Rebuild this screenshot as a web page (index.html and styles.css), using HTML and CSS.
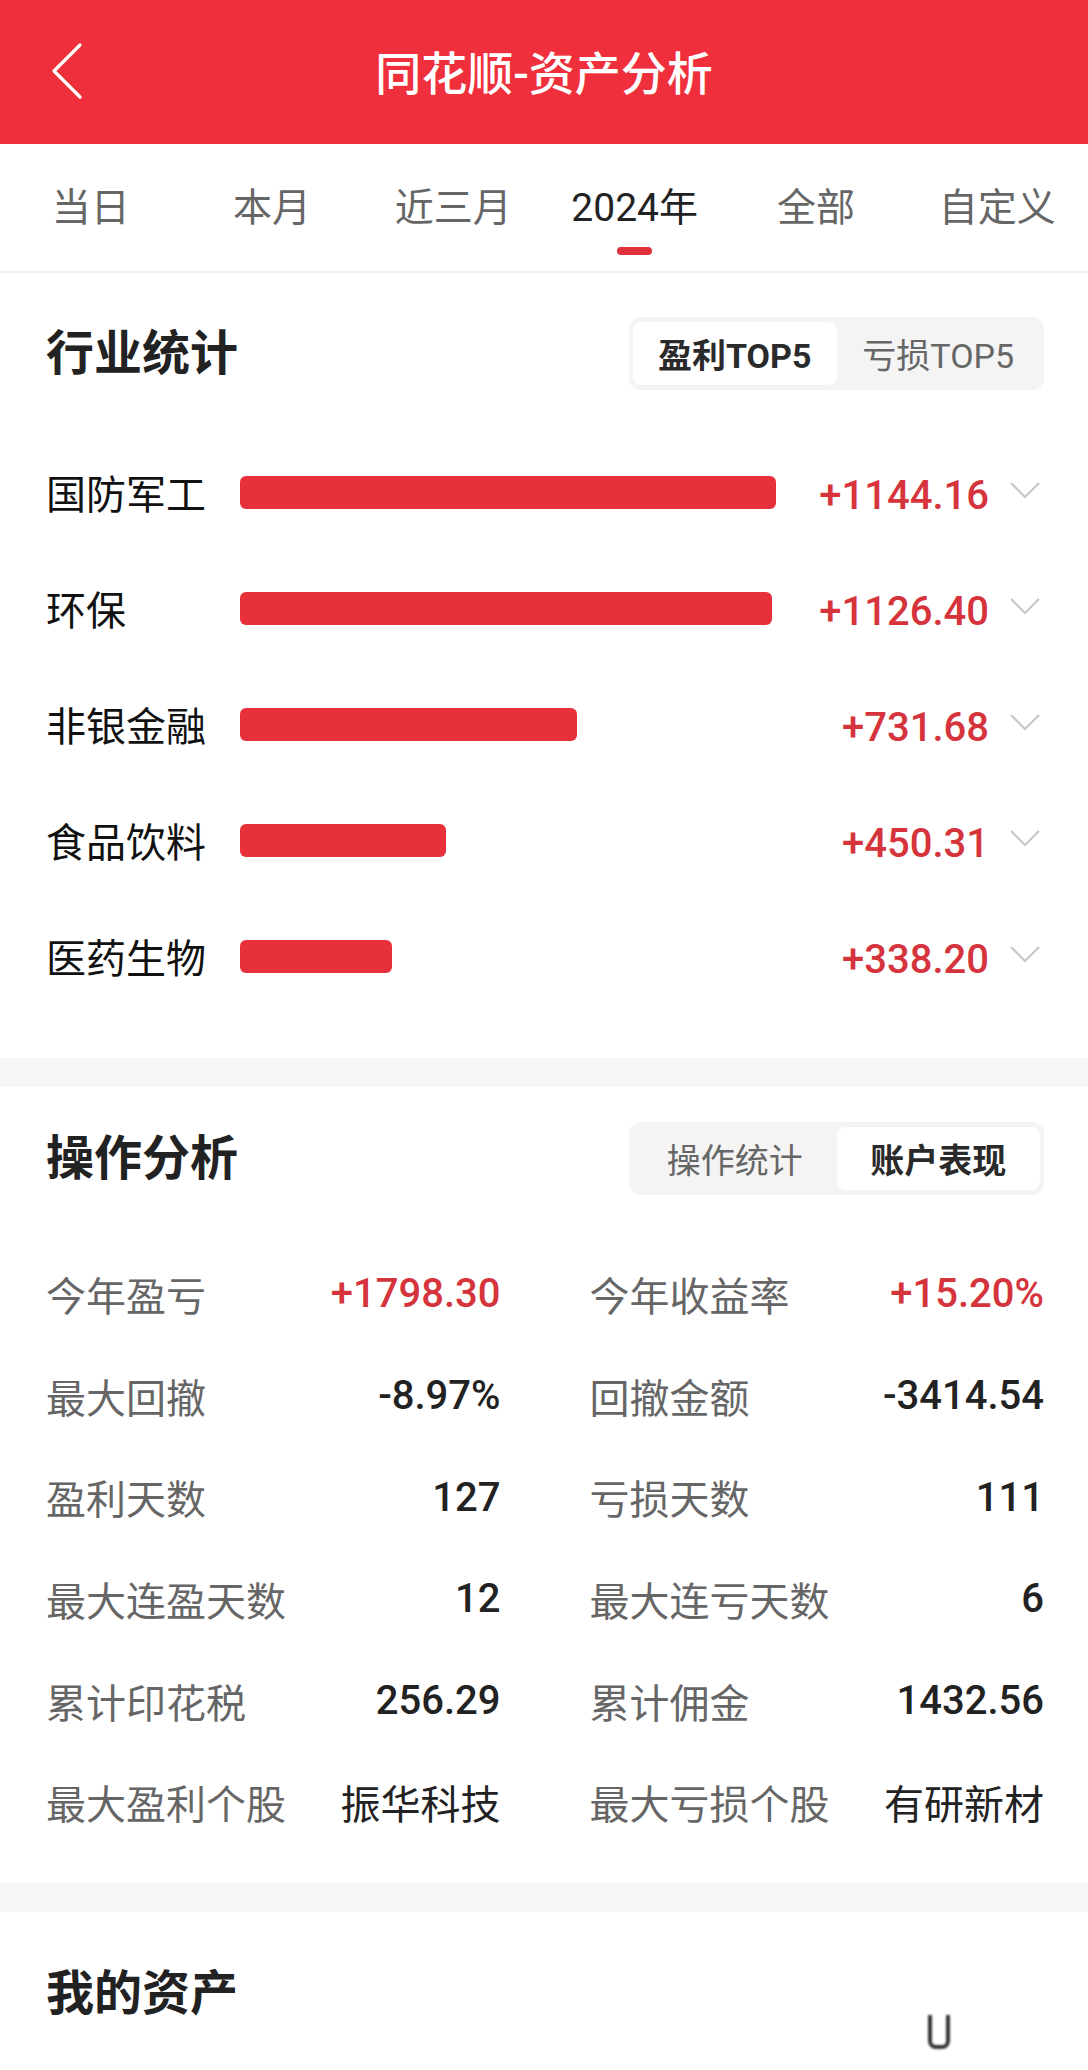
FILE: index.html
```html
<!DOCTYPE html>
<html lang="zh-CN">
<head>
    <meta charset="UTF-8">
    <meta name="viewport" content="width=device-width, initial-scale=1.0">
    <title>同花顺-资产分析</title>
    <link rel="stylesheet" href="styles.css">
</head>
<body>

    <!-- 顶部红色导航栏 -->
    <header class="topbar">
        <a href="#" class="back">
            <svg width="32" height="58" viewBox="0 0 32 58"><polyline points="29,3 3,29 29,55" fill="none" stroke="#fff" stroke-width="3.2" stroke-linecap="round" stroke-linejoin="round"/></svg>
        </a>
        <h1>同花顺-资产分析</h1>
        <span></span>
    </header>

    <!-- 时间范围切换 -->
    <nav class="tabs">
        <a class="tab">当日</a>
        <a class="tab">本月</a>
        <a class="tab">近三月</a>
        <a class="tab active">2024年</a>
        <a class="tab">全部</a>
        <a class="tab">自定义</a>
    </nav>

    <!-- 行业统计 -->
    <section class="card industry">
        <div class="card-head">
            <h2>行业统计</h2>
            <div class="switch">
                <span class="on">盈利TOP5</span>
                <span>亏损TOP5</span>
            </div>
        </div>
        <div class="rows">
            <div class="row">
                <span class="name">国防军工</span>
                <div class="track"><div class="bar" style="width: 536px"></div></div>
                <span class="num">+1144.16</span>
                <span class="more"><svg width="32" height="18" viewBox="0 0 32 18"><polyline points="2,2 16,16 30,2" fill="none" stroke="#c6c6c6" stroke-width="2"/></svg></span>
            </div>
            <div class="row">
                <span class="name">环保</span>
                <div class="track"><div class="bar" style="width: 532px"></div></div>
                <span class="num">+1126.40</span>
                <span class="more"><svg width="32" height="18" viewBox="0 0 32 18"><polyline points="2,2 16,16 30,2" fill="none" stroke="#c6c6c6" stroke-width="2"/></svg></span>
            </div>
            <div class="row">
                <span class="name">非银金融</span>
                <div class="track"><div class="bar" style="width: 337px"></div></div>
                <span class="num">+731.68</span>
                <span class="more"><svg width="32" height="18" viewBox="0 0 32 18"><polyline points="2,2 16,16 30,2" fill="none" stroke="#c6c6c6" stroke-width="2"/></svg></span>
            </div>
            <div class="row">
                <span class="name">食品饮料</span>
                <div class="track"><div class="bar" style="width: 206px"></div></div>
                <span class="num">+450.31</span>
                <span class="more"><svg width="32" height="18" viewBox="0 0 32 18"><polyline points="2,2 16,16 30,2" fill="none" stroke="#c6c6c6" stroke-width="2"/></svg></span>
            </div>
            <div class="row">
                <span class="name">医药生物</span>
                <div class="track"><div class="bar" style="width: 152px"></div></div>
                <span class="num">+338.20</span>
                <span class="more"><svg width="32" height="18" viewBox="0 0 32 18"><polyline points="2,2 16,16 30,2" fill="none" stroke="#c6c6c6" stroke-width="2"/></svg></span>
            </div>
        </div>
    </section>

    <!-- 操作分析 -->
    <section class="card ops">
        <div class="card-head">
            <h2>操作分析</h2>
            <div class="switch">
                <span>操作统计</span>
                <span class="on">账户表现</span>
            </div>
        </div>
        <div class="stats">
            <div class="stat"><span class="label">今年盈亏</span><span class="val up">+1798.30</span></div>
            <div class="stat"><span class="label">今年收益率</span><span class="val up">+15.20%</span></div>
            <div class="stat"><span class="label">最大回撤</span><span class="val">-8.97%</span></div>
            <div class="stat"><span class="label">回撤金额</span><span class="val">-3414.54</span></div>
            <div class="stat"><span class="label">盈利天数</span><span class="val">127</span></div>
            <div class="stat"><span class="label">亏损天数</span><span class="val">111</span></div>
            <div class="stat"><span class="label">最大连盈天数</span><span class="val">12</span></div>
            <div class="stat"><span class="label">最大连亏天数</span><span class="val">6</span></div>
            <div class="stat"><span class="label">累计印花税</span><span class="val">256.29</span></div>
            <div class="stat"><span class="label">累计佣金</span><span class="val">1432.56</span></div>
            <div class="stat"><span class="label">最大盈利个股</span><span class="val stock">振华科技</span></div>
            <div class="stat"><span class="label">最大亏损个股</span><span class="val stock">有研新材</span></div>
        </div>
    </section>

    <!-- 我的资产 -->
    <section class="card assets">
        <h2>我的资产</h2>
        <div class="scroll-hint"></div>
    </section>

</body>
</html>
```

FILE: styles.css
```css
/* 通用样式 */
body {
    margin: 0;
    padding: 0;
    font-family: Roboto, "Noto Sans CJK SC", sans-serif;
    background-color: #f5f6f8;
    color: #222;
}

/* 顶部导航栏 */
.topbar {
    height: 144px;
    background-color: #ef303c;
    display: grid;
    grid-template-columns: 1fr auto 1fr;
    align-items: center;
    color: #fff;
}

.back {
    padding-left: 51px;
    display: flex;
    align-items: center;
    padding-bottom: 2px;
}

.topbar h1 {
    margin: 0;
    font-size: 46px;
    font-weight: 500;
    letter-spacing: 0;
    padding-bottom: 4px;
}

/* 时间切换 */
.tabs {
    display: grid;
    grid-template-columns: repeat(6, 1fr);
    height: 127px;
    background-color: #fff;
    border-bottom: 2px solid #efefef;
}

.tab {
    display: flex;
    flex-direction: column;
    align-items: center;
    justify-content: flex-start;
    padding-top: 42px;
    font-size: 39px;
    line-height: 44px;
    color: #666;
    position: relative;
}

.tab.active {
    color: #222;
}

.tab.active::after {
    content: "";
    width: 35px;
    height: 8px;
    border-radius: 4px;
    background-color: #e0313a;
    margin-top: 17px;
}

/* 卡片 */
.card {
    background-color: #fff;
    padding: 44px 44px 44px 46px;
    margin-bottom: 29px;
}

.card-head {
    display: flex;
    justify-content: space-between;
    align-items: center;
}

.card h2 {
    margin: 0;
    font-size: 48px;
    font-weight: 700;
    color: #222;
    line-height: 60px;
}

/* 切换按钮 */
.switch {
    display: flex;
    width: 415px;
    height: 73px;
    box-sizing: border-box;
    padding: 5px 4px;
    background-color: #f4f4f4;
    border-radius: 12px;
}

.switch span {
    flex: 1;
    display: flex;
    align-items: center;
    justify-content: center;
    font-size: 34px;
    color: #666;
    border-radius: 9px;
}

.switch span.on {
    background-color: #fff;
    color: #2a2a2a;
    font-weight: 700;
}

/* 行业统计列表 */
.industry .rows {
    margin-top: 44px;
}

.row {
    display: grid;
    grid-template-columns: 194px 1fr 200px 55px;
    align-items: center;
    height: 116px;
}

.row .name {
    font-size: 40px;
    color: #111;
}

.bar {
    height: 33px;
    border-radius: 6px;
    background-color: #e8303a;
}

.row .num {
    text-align: right;
    font-size: 40px;
    font-weight: 500;
    color: #d5343c;
    padding-top: 6px;
}

.row .more {
    display: flex;
    justify-content: flex-end;
    padding-right: 3px;
    padding-bottom: 4px;
}

/* 操作分析 */
.ops {
    padding-top: 35px;
    padding-bottom: 30px;
}

.stats {
    margin-top: 48px;
    display: grid;
    grid-template-columns: 1fr 1fr;
    column-gap: 89px;
}

.stat {
    display: flex;
    justify-content: space-between;
    align-items: center;
    height: 101.7px;
}

.stat .label {
    font-size: 40px;
    color: #666;
}

.stat .val {
    font-size: 40px;
    font-weight: 500;
    color: #222;
}

.stat .val.stock {
    font-weight: 400;
}

.stat .val.up {
    color: #d5343c;
}

/* 我的资产 */
.assets {
    position: relative;
    padding-top: 52px;
    padding-bottom: 120px;
    margin-bottom: 0;
}

/* 右下角滚动提示 */
.scroll-hint {
    position: absolute;
    left: 928px;
    top: 103px;
    width: 14px;
    height: 30px;
    border: 4px solid #333;
    border-top: none;
    border-radius: 0 0 8px 8px;
    filter: blur(1.2px);
}
```
